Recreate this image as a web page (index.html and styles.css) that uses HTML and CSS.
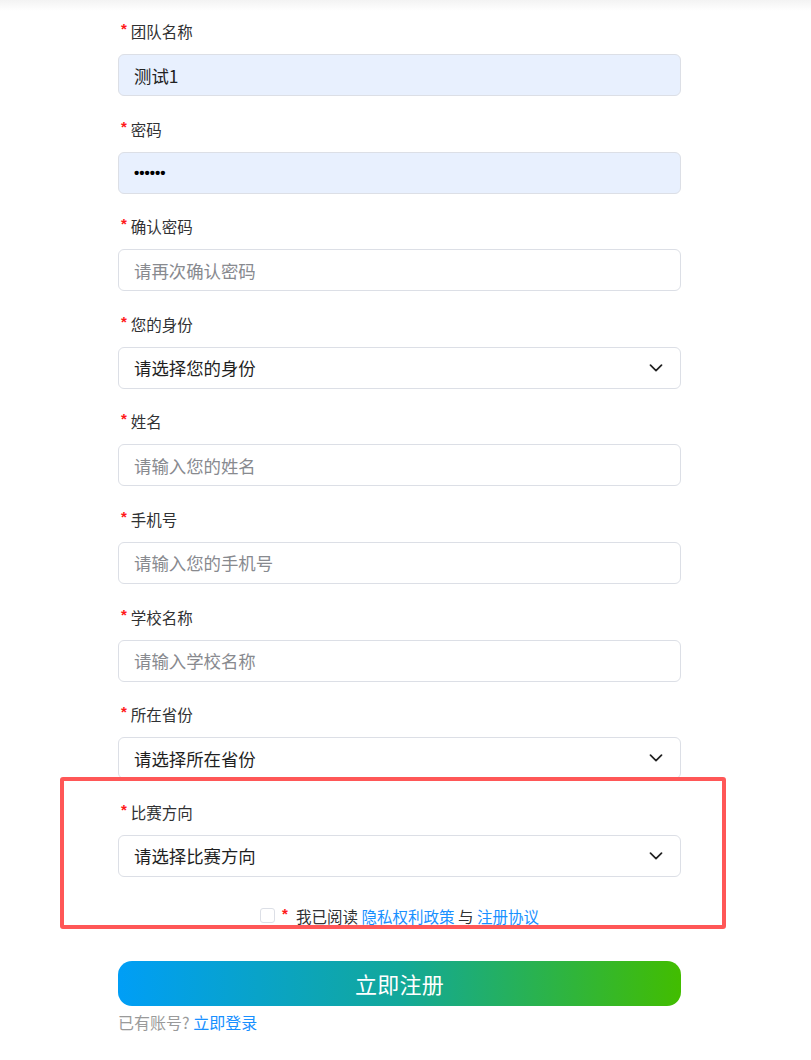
FILE: index.html
```html
<!DOCTYPE html>
<html lang="zh-CN">
<head>
<meta charset="utf-8">
<title>注册</title>
<link rel="stylesheet" href="styles.css">
</head>
<body>
<div class="page">
  <form class="form">
    <div class="item">
      <label class="label"><span class="req">*</span>团队名称</label>
      <input class="input filled" type="text" value="测试1">
    </div>
    <div class="item">
      <label class="label"><span class="req">*</span>密码</label>
      <input class="input filled pwd" type="password" value="123456">
    </div>
    <div class="item">
      <label class="label"><span class="req">*</span>确认密码</label>
      <input class="input" type="password" placeholder="请再次确认密码">
    </div>
    <div class="item">
      <label class="label"><span class="req">*</span>您的身份</label>
      <div class="select"><span>请选择您的身份</span><svg class="chev" viewBox="0 0 14 8" width="14" height="8"><path d="M1.5 1.2 7 6.6l5.5-5.4" fill="none" stroke="#222" stroke-width="1.7" stroke-linecap="round" stroke-linejoin="round"/></svg></div>
    </div>
    <div class="item">
      <label class="label"><span class="req">*</span>姓名</label>
      <input class="input" type="text" placeholder="请输入您的姓名">
    </div>
    <div class="item">
      <label class="label"><span class="req">*</span>手机号</label>
      <input class="input" type="text" placeholder="请输入您的手机号">
    </div>
    <div class="item">
      <label class="label"><span class="req">*</span>学校名称</label>
      <input class="input" type="text" placeholder="请输入学校名称">
    </div>
    <div class="item">
      <label class="label"><span class="req">*</span>所在省份</label>
      <div class="select"><span>请选择所在省份</span><svg class="chev" viewBox="0 0 14 8" width="14" height="8"><path d="M1.5 1.2 7 6.6l5.5-5.4" fill="none" stroke="#222" stroke-width="1.7" stroke-linecap="round" stroke-linejoin="round"/></svg></div>
    </div>
    <div class="item last">
      <label class="label"><span class="req">*</span>比赛方向</label>
      <div class="select"><span>请选择比赛方向</span><svg class="chev" viewBox="0 0 14 8" width="14" height="8"><path d="M1.5 1.2 7 6.6l5.5-5.4" fill="none" stroke="#222" stroke-width="1.7" stroke-linecap="round" stroke-linejoin="round"/></svg></div>
    </div>
    <div class="agree">
      <span class="checkbox"></span>
      <span class="req">*</span>
      <span class="agree-text">我已阅读 <a class="link">隐私权利政策</a> 与 <a class="link">注册协议</a></span>
    </div>
    <button type="button" class="submit">立即注册</button>
    <div class="login">已有账号?&nbsp;<a class="link">立即登录</a></div>
  </form>
  <div class="highlight"></div>
</div>
</body>
</html>
```
FILE: styles.css
```css
* { box-sizing: border-box; }
html, body { margin: 0; padding: 0; background: #fff; }
body {
  font-family: "Noto Sans CJK SC", "Noto Sans", sans-serif;
  color: #303133;
}
.page {
  position: relative;
  min-height: 1060px;
  background: linear-gradient(#f3f3f3, #fff 11px) no-repeat;
  padding-top: 20px;
}
.form {
  width: 563px;
  margin-left: 118px;
}
.item {
  display: flex;
  flex-direction: column;
  margin-bottom: 21.6px;
}
.item.last { margin-bottom: 0; }
.label {
  display: flex;
  align-items: center;
  height: 22px;
  font-size: 15.5px;
  line-height: 22px;
  color: #303133;
  margin-bottom: 12px;
}
.req {
  color: #ff1a1a;
  font-family: "Liberation Sans", sans-serif;
  font-size: 15px;
  font-weight: bold;
  margin-left: 3px;
  margin-right: 4px;
  position: relative;
  top: -2px;
}
.input, .select {
  height: 42px;
  width: 100%;
  border: 1px solid #dcdfe6;
  border-radius: 6px;
  padding: 0 15px;
  font-family: "Noto Sans CJK SC", sans-serif;
  font-size: 17.4px;
  color: #222;
  background: #fff;
  outline: none;
}
.input::placeholder { color: #888a8f; }
.input.filled { background: #e8f0fe; }
.input.pwd {
  font-family: "Liberation Sans", sans-serif;
  font-size: 15px;
  font-weight: bold;
  color: #000;
}
.select {
  display: flex;
  align-items: center;
  justify-content: space-between;
  padding-right: 17px;
  color: #1f1f1f;
}
.chev { display: block; }
.agree {
  display: flex;
  align-items: center;
  justify-content: center;
  height: 22px;
  margin-top: 28px;
  font-size: 15.5px;
}
.checkbox {
  width: 15px;
  height: 15px;
  border: 1px solid #dcdfe6;
  border-radius: 3px;
  background: #fff;
  margin-right: 4px;
}
.agree .req { margin-right: 8px; margin-left: 3px; }
.agree-text { color: #303133; }
.link { color: #1890ff; text-decoration: none; }
.submit {
  display: block;
  width: 100%;
  height: 45px;
  margin-top: 34px;
  border: 0;
  border-radius: 14px;
  background: linear-gradient(90deg, #009ef6 0%, #12a89a 50%, #42bd00 100%);
  color: #fff;
  font-family: "Noto Sans CJK SC", sans-serif;
  font-size: 22px;
  font-weight: 400;
  letter-spacing: 0.3px;
}
.login {
  margin-top: 5px;
  height: 22px;
  line-height: 22px;
  font-size: 16px;
  color: #9a9a9a;
}
.highlight {
  position: absolute;
  left: 60px;
  top: 777px;
  width: 666px;
  height: 152px;
  border: 4px solid #ff5757;
  border-radius: 3px;
  pointer-events: none;
}
```
